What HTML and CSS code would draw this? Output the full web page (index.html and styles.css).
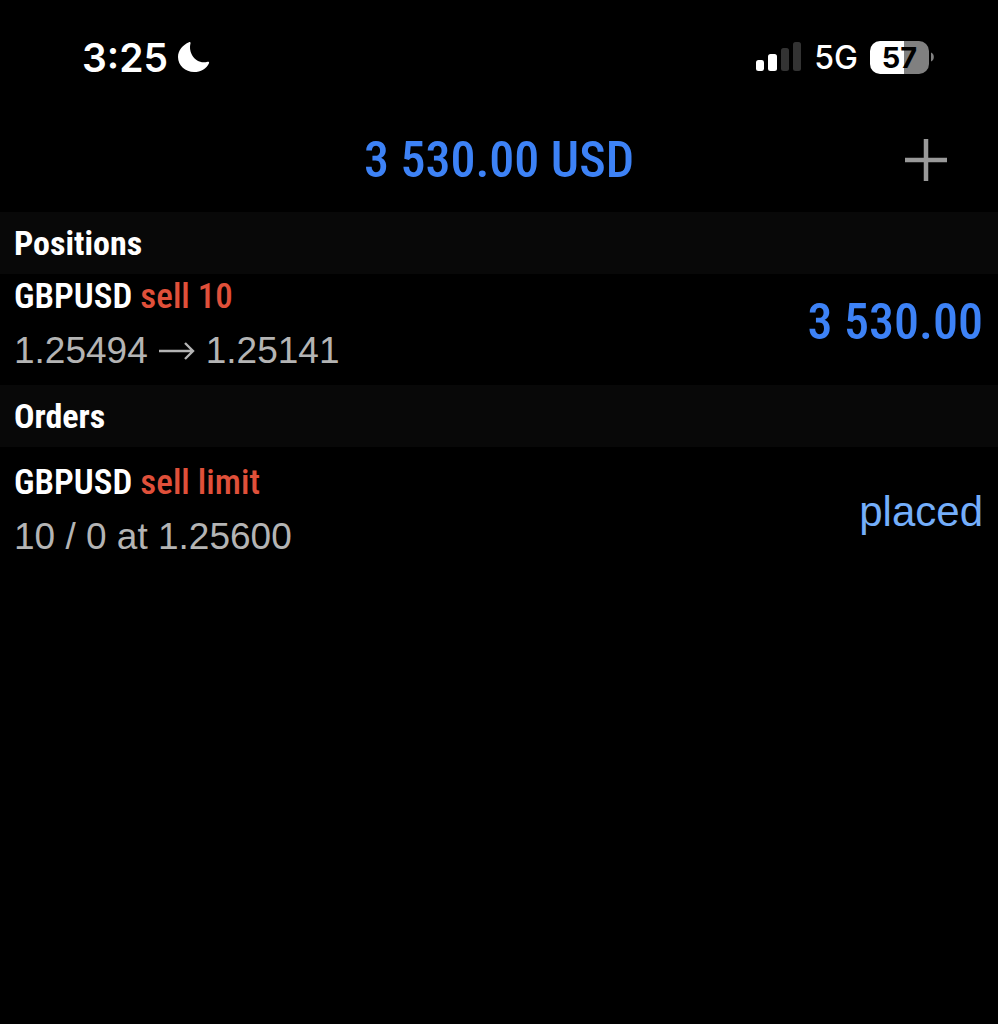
FILE: index.html
```html
<!DOCTYPE html>
<html lang="en">
<head>
    <meta charset="UTF-8">
    <meta name="viewport" content="width=device-width, initial-scale=1.0">
    <title>Trade</title>
    <link rel="stylesheet" href="styles.css">
</head>
<body>
    <div class="status-bar">
        <div class="status-left">
            <span class="clock">3:25</span>
            <svg class="moon" viewBox="0 0 32 32" aria-hidden="true">
                <path d="M11 1.2C12 .8 12.800 1.500 12.500 2.500C10 11.500 17.500 24 29.600 20.800C30.700 20.500 31.500 21.200 31 22.200C28.400 27.800 22.800 31 16 31C7.500 31 0 24.500 0 16C0 9.300 5 3.700 11 1.200Z" fill="#fff"/>
            </svg>
        </div>
        <div class="status-right">
            <svg class="signal" viewBox="0 0 46 30" aria-hidden="true">
                <rect x="0" y="18" width="8" height="11" rx="2.500" fill="#fff"/>
                <rect x="12" y="12" width="9" height="17" rx="2.500" fill="#fff"/>
                <rect x="25" y="6" width="8" height="23" rx="2.500" fill="#333"/>
                <rect x="37" y="0" width="8" height="29" rx="2.500" fill="#333"/>
            </svg>
            <span class="network">5G</span>
            <div class="battery">
                <span class="battery-level">57</span>
                <svg class="battery-tip" viewBox="0 0 4 12" aria-hidden="true">
                    <path d="M0 0C5 2 5 10 0 12Z" fill="#808080"/>
                </svg>
            </div>
        </div>
    </div>

    <header class="top-bar">
        <h1>3 530.00 USD</h1>
        <button class="add-button" type="button" aria-label="New order">
            <svg viewBox="0 0 44 44" aria-hidden="true">
                <path d="M22 1V43M1 22H43" stroke="#999" stroke-width="4.500"/>
            </svg>
        </button>
    </header>

    <main>
        <section>
            <h2>Positions</h2>
            <div class="row">
                <div class="details">
                    <div class="symbol">GBPUSD <span class="sell">sell 10</span></div>
                    <div class="price">
                        <span>1.25494</span>
                        <svg class="arrow" viewBox="0 0 36 20" aria-hidden="true">
                            <path d="M0 10H34M26 2L34 10L26 18" fill="none" stroke="#b4b4b4" stroke-width="2.400"/>
                        </svg>
                        <span>1.25141</span>
                    </div>
                </div>
                <div class="profit">3 530.00</div>
            </div>
        </section>
        <section>
            <h2>Orders</h2>
            <div class="row order">
                <div class="details">
                    <div class="symbol">GBPUSD <span class="sell">sell limit</span></div>
                    <div class="price">10 / 0 at 1.25600</div>
                </div>
                <div class="state">placed</div>
            </div>
        </section>
    </main>
</body>
</html>
```

FILE: styles.css
```css
body {
    margin: 0;
    min-height: 100vh;
    background: #000;
    color: #fff;
    font-family: "Liberation Sans", Arial, sans-serif;
}
h1, h2 {
    margin: 0;
}
svg {
    display: block;
}

/* Status bar */
.status-bar {
    display: flex;
    justify-content: space-between;
    align-items: center;
    height: 114px;
    padding: 0 64px 0 82px;
    font-family: Inter, sans-serif;
}
.status-left,
.status-right {
    display: flex;
    align-items: center;
}
.status-left {
    gap: 10px;
}
.status-right {
    gap: 12px;
}
.clock {
    font-size: 39px;
    font-weight: 600;
}
.moon {
    width: 32px;
    height: 32px;
}
.signal {
    width: 46px;
    height: 30px;
}
.network {
    font-size: 32px;
    font-weight: 500;
}
.battery {
    display: flex;
    align-items: center;
    gap: 2px;
}
.battery-level {
    width: 59px;
    border-radius: 10px;
    background: linear-gradient(to right, #fff 57%, #808080 57%);
    color: #000;
    font-size: 29px;
    font-weight: 700;
    line-height: 33px;
    text-align: center;
}
.battery-tip {
    width: 3px;
    height: 12px;
}

/* Account total */
.top-bar {
    display: grid;
    grid-template-columns: 1fr auto 1fr;
    align-items: center;
    height: 92px;
    padding: 0 50px 6px;
}
h1,
h2,
.symbol,
.profit {
    font-family: "Roboto Condensed", "Arial Narrow", sans-serif;
}
h1,
.profit {
    color: #3d82f6;
    font-size: 50px;
    font-weight: 500;
    line-height: 60px;
}
h1 {
    grid-column: 2;
}
.add-button {
    justify-self: end;
    width: 44px;
    height: 44px;
    padding: 0;
    border: 0;
    background: none;
    cursor: pointer;
}

/* Lists */
h2 {
    padding: 0 14px;
    background: #080808;
    font-size: 34px;
    font-weight: 700;
    line-height: 62px;
}
.row {
    display: flex;
    justify-content: space-between;
    align-items: center;
    padding: 0 15px 3px 14px;
}
.order {
    padding-top: 13px;
}
.symbol {
    font-size: 35px;
    font-weight: 600;
    line-height: 46px;
}
.sell {
    color: #e0503a;
    font-weight: 500;
}
.price {
    display: flex;
    align-items: center;
    gap: 11px;
    color: #b4b4b4;
    font-size: 37px;
    line-height: 62px;
}
.arrow {
    width: 36px;
    height: 20px;
}
.profit {
    padding-bottom: 12px;
}
.state {
    padding-bottom: 4px;
    color: #74aefa;
    font-size: 42px;
    line-height: 60px;
}
```
